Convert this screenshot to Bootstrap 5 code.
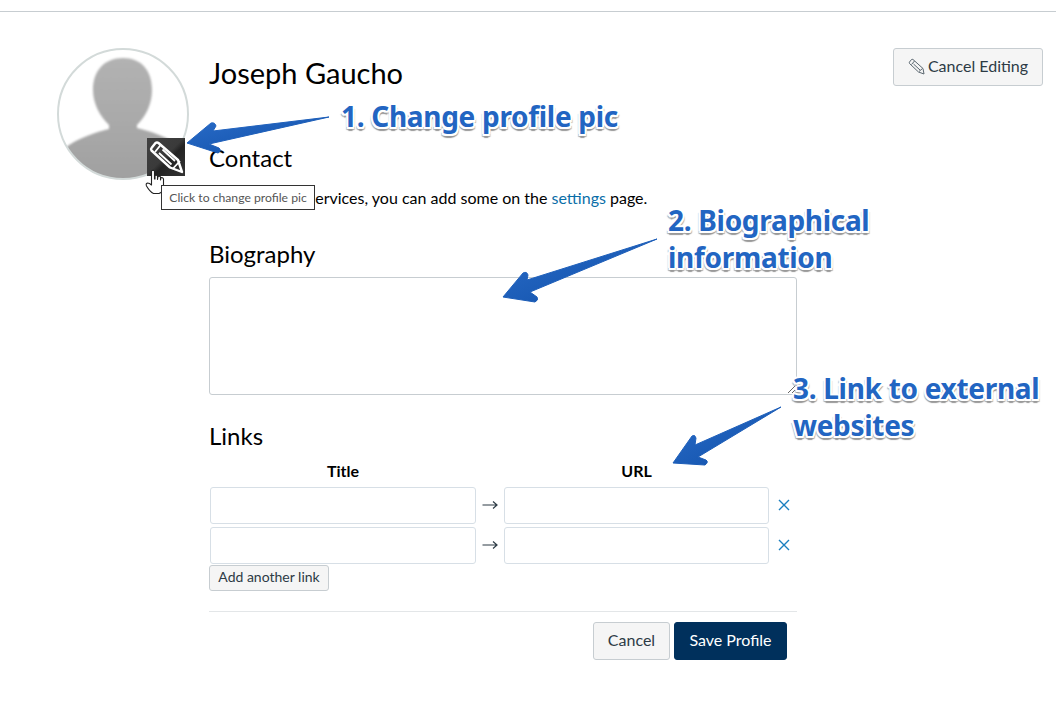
<!DOCTYPE html>
<html lang="en">
<head>
<meta charset="utf-8">
<title>Edit Profile</title>
<link href="https://cdn.jsdelivr.net/npm/bootstrap@5.3.0/dist/css/bootstrap.min.css" rel="stylesheet">
<style>
html,body{height:702px;overflow:hidden}
body{font-family:Lato,"Liberation Sans",sans-serif;font-size:16px;color:#000;background:#fff;position:relative}
.top-rule{height:12px;border-bottom:1px solid #c7cdd1}
.page-row{margin-top:36px;padding-left:57px;padding-right:13px;gap:20px}
.avatar-box{position:relative;width:132px;height:132px;flex:none}
.avatar-box svg{display:block}
.edit-tile{position:absolute;left:90px;top:90px;width:38px;height:38px;background:linear-gradient(135deg,#404040 0%,#3a3a3a 48%,#232323 58%,#333 100%)}
.hand{position:absolute;left:88px;top:121px}
.pic-tip{position:absolute;left:104px;top:137px;width:154px;height:25px;border:1px solid #333;background:#fff;color:#555;font-size:12.2px;line-height:23px;text-align:center;white-space:nowrap;z-index:3}
.main-col{width:588px;flex:none;padding-top:7px}
.h-name{font-size:29px;line-height:36px;font-weight:400;margin:0}
.h-sec{font-size:24px;line-height:30px;font-weight:400;margin:0}
.sec-contact{margin-top:52px}
.contact-text{line-height:24px;margin:13px 0 0}
.contact-text a{color:#0a6ea8;text-decoration:none}
.sec-bio{margin-top:29px}
.bio-area{display:block;margin-top:8px;width:588px;height:118px;border:1px solid #c7cdd1;border-radius:3px;padding:4px 8px}
.sec-links{margin-top:26px}
.link-heads{margin-top:8px;line-height:24px;font-weight:700;font-size:16px}
.col-a{width:266px;flex:none;margin-left:1px;text-align:center}
.col-mid{width:28px;flex:none;text-align:center;color:#2d3b45}
.col-mid svg{margin-bottom:5px}
.col-b{width:265px;flex:none;text-align:center}
.link-row{height:37px;margin-top:3px;align-items:center}
.link-rows{margin-top:4px}
.link-input{height:37px;border:1px solid #d7dfe6;border-radius:3px;padding:4px 8px}
.del-x{width:30px;flex:none;display:flex;justify-content:center;padding-bottom:2px}
.btn-canvas{background:#f5f5f5;border:1px solid #c7cdd1;color:#2d3b45;border-radius:3px;font-size:16px;line-height:24px;padding:6px 14px}
.btn-canvas:hover{background:#eee;color:#2d3b45;border-color:#c7cdd1}
.btn-add{font-size:14px;line-height:18px;padding:2px 8px 4px;margin-top:1px;display:block;height:26px;width:120px;white-space:nowrap}
.rule-line{border-top:1px solid #e3e6e8;margin-top:20px;padding-top:10px;gap:4px;padding-right:10px}
.btn-cancel{width:77px;height:38px;padding:5px 0 7px}
.btn-save{width:113px;height:38px;padding:5px 0 7px;background:#00305c;border:1px solid #00305c;color:#fff;border-radius:3px;font-size:16px;line-height:24px}
.btn-save:hover{background:#00305c;color:#fff}
.btn-edit{width:150px;height:38px;padding:5px 0 7px;margin-left:auto;display:flex;align-items:center;justify-content:center;gap:3px;white-space:nowrap}
.anno-layer{position:absolute;left:0;top:0;z-index:4;pointer-events:none}
.anno{position:absolute;z-index:5;font-family:"Noto Sans","Open Sans",sans-serif;font-weight:700;font-size:28px;letter-spacing:-.3px;line-height:37px;color:#2265c2;white-space:nowrap;text-shadow:2px 0 0 #fff,-2px 0 0 #fff,0 2px 0 #fff,0 -2px 0 #fff,1.5px 1.5px 0 #fff,-1.5px 1.5px 0 #fff,1.5px -1.5px 0 #fff,-1.5px -1.5px 0 #fff,0 3.5px 1px #999,2px 2.5px 1px #aaa,-2px 2.5px 1px #aaa}
.anno-1{left:341px;top:98px}
.anno-2{left:668px;top:202px}
.anno-3{left:793px;top:370px}
</style>
</head>
<body>
<div class="top-rule"></div>
<div class="d-flex align-items-start page-row">
  <div class="avatar-box">
    <svg width="132" height="132" viewBox="0 0 132 132">
      <defs>
        <clipPath id="cp"><circle cx="66" cy="66" r="65"/></clipPath>
        <filter id="bl"><feGaussianBlur stdDeviation="1"/></filter>
        <linearGradient id="sil" x1="0" y1="0" x2="0" y2="1"><stop offset="0" stop-color="#b2b2b2"/><stop offset=".6" stop-color="#a8a8a8"/><stop offset="1" stop-color="#a0a0a0"/></linearGradient>
      </defs>
      <circle cx="66" cy="66" r="65" fill="#fff"/>
      <g clip-path="url(#cp)">
        <path filter="url(#bl)" d="M8 100C20 90 40 84 52 81L52 77C43 68 36 56 36 42C36 22 48 10 66 10C84 10 95 22 95 42C95 56 89 68 80 77L80 80C92 83 110 88 126 100L126 132L8 132Z" fill="url(#sil)"/>
      </g>
      <circle cx="66" cy="66" r="65" fill="none" stroke="#d3dad9" stroke-width="2"/>
    </svg>
    <div class="edit-tile">
      <svg width="38" height="38" viewBox="0 0 38 38" fill="none" stroke="#fff" stroke-width="2.4" stroke-linejoin="round">
        <path d="M4.500 10L8.500 5Q10 3.800 11.500 5L31 22L35 34L23 29.500L4.500 12.500Q3.500 11 4.500 10Z"/>
        <path d="M8 14L14 6.500M26 30.500L33 23" stroke-width="1.800"/>
        <path d="M12 15L24.500 26.500M15.500 11.500L28 23" stroke-width="1.800"/>
      </svg>
    </div>
    <svg class="hand" width="20" height="26" viewBox="0 0 20 26" fill="#fff" stroke="#222" stroke-width="1.100" stroke-linejoin="round">
      <path d="M6.500 2Q8 .5 9.500 2L9.500 10L10 10L10 6.500Q11.500 5.500 12.500 7L12.500 10.500L13 7.500Q14.500 6.500 15.500 8L15.500 11L16 8.800Q17.500 8 18.500 10L18.500 17Q18.500 23 14 24.500L8.500 24.500Q5 23 1.500 17Q.5 14.500 2.500 14Q4.500 14 6.500 16Z"/>
    </svg>
    <div class="pic-tip">Click to change profile pic</div>
  </div>
  <div class="main-col">
    <h1 class="h-name">Joseph Gaucho</h1>
    <h2 class="h-sec sec-contact">Contact</h2>
    <p class="contact-text">No registered services, you can add some on the <a href="#">settings</a> page.</p>
    <h2 class="h-sec sec-bio">Biography</h2>
    <textarea class="form-control bio-area" aria-label="Biography"></textarea>
    <h2 class="h-sec sec-links">Links</h2>
    <div class="d-flex link-heads"><div class="col-a">Title</div><div class="col-mid"></div><div class="col-b">URL</div></div>
    <div class="link-rows">
      <div class="d-flex link-row">
        <div class="col-a"><input class="form-control link-input" aria-label="Title"></div>
        <div class="col-mid"><svg width="16" height="10" viewBox="0 0 16 10" fill="none" stroke="#2d3b45" stroke-width="1.200"><path d="M.5 5H15M11 1.500L15 5L11 8.500"/></svg></div>
        <div class="col-b"><input class="form-control link-input" aria-label="URL"></div>
        <div class="del-x"><svg width="12" height="12" viewBox="0 0 12 12" fill="none" stroke="#1a7fc0" stroke-width="1.400"><path d="M1 1L11 11M11 1L1 11"/></svg></div>
      </div>
      <div class="d-flex link-row">
        <div class="col-a"><input class="form-control link-input" aria-label="Title"></div>
        <div class="col-mid"><svg width="16" height="10" viewBox="0 0 16 10" fill="none" stroke="#2d3b45" stroke-width="1.200"><path d="M.5 5H15M11 1.500L15 5L11 8.500"/></svg></div>
        <div class="col-b"><input class="form-control link-input" aria-label="URL"></div>
        <div class="del-x"><svg width="12" height="12" viewBox="0 0 12 12" fill="none" stroke="#1a7fc0" stroke-width="1.400"><path d="M1 1L11 11M11 1L1 11"/></svg></div>
      </div>
    </div>
    <button type="button" class="btn btn-canvas btn-add">Add another link</button>
    <div class="d-flex justify-content-end rule-line">
      <button type="button" class="btn btn-canvas btn-cancel">Cancel</button>
      <button type="button" class="btn btn-save">Save Profile</button>
    </div>
  </div>
  <button type="button" class="btn btn-canvas btn-edit">
    <svg width="17" height="17" viewBox="0 0 17 17" fill="none" stroke="#5b6770" stroke-width="1" stroke-linejoin="round"><path d="M1.500 4L3.500 1.500Q4 1 5 1.500L15 10.500L16 16L10.500 14L1.500 5.500Q1 4.800 1.500 4Z"/><path d="M3.500 6.500L6.500 3M11 13.500L14.500 10.500M5.500 6L12 12"/></svg>
    Cancel Editing
  </button>
</div>
<svg class="anno-layer" width="1056" height="702" viewBox="0 0 1056 702">
  <defs><linearGradient id="ag" x1="0" y1="0" x2="1" y2="1"><stop offset="0" stop-color="#2a6cc8"/><stop offset="1" stop-color="#0f4fa8"/></linearGradient></defs>
  <g fill="url(#ag)" stroke="url(#ag)" stroke-width="1" stroke-linejoin="round">
    <path d="M329 117L213 131L216 126Q215 122 211 123L187 143L218 153Q222 151 219 148L209 144Z"/>
    <path d="M657 239L527 280L528 275Q527 271 523 273L503 297L535 302Q539 300 537 297L530 292Z"/>
    <path d="M781 407L695 445L696 438Q695 434 692 436L673 463L705 465Q709 462 706 460L698 457Z"/>
  </g>
</svg>
<div class="anno anno-1">1. Change profile pic</div>
<div class="anno anno-2">2. Biographical<br>information</div>
<div class="anno anno-3">3. Link to external<br>websites</div>
<script src="https://cdn.jsdelivr.net/npm/bootstrap@5.3.0/dist/js/bootstrap.bundle.min.js"></script>
</body>
</html>
